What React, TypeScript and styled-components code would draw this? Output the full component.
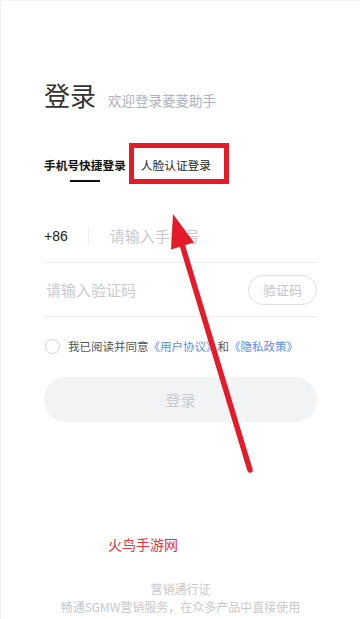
import React from "react";
import styled, { createGlobalStyle } from "styled-components";

const Global = createGlobalStyle`
  html, body { margin: 0; padding: 0; background: #fff; }
  body { font-family: "Noto Sans CJK SC", "Noto Sans", sans-serif; }
  * { box-sizing: border-box; }
`;

const Page = styled.div`
  position: relative;
  width: 360px;
  height: 619px;
  overflow: hidden;
  background: #fff;
  border-left: 1px solid #f0f0f0;
  border-top: 1px solid #f6f6f6;
  display: flex;
  flex-direction: column;
`;

const Content = styled.div`
  padding: 78px 43px 0 43px;
  display: flex;
  flex-direction: column;
`;

const Header = styled.div`
  display: flex;
  align-items: baseline;
  gap: 12px;
  height: 32px;
`;

const Title = styled.h1`
  margin: 0;
  font-size: 26px;
  line-height: 32px;
  font-weight: 400;
  color: #333;
`;

const Subtitle = styled.span`
  font-size: 13.5px;
  color: #aab0c0;
`;

const Tabs = styled.div`
  margin-top: 44px;
  display: flex;
  gap: 15px;
`;

const Tab = styled.div<{ $active?: boolean }>`
  display: flex;
  flex-direction: column;
  align-items: center;
  font-size: 11.7px;
  line-height: 20px;
  color: ${(p) => (p.$active ? "#111" : "#222")};
  font-weight: ${(p) => (p.$active ? 700 : 400)};
  &::after {
    content: "";
    margin-top: 5px;
    width: 30px;
    height: 2px;
    background: ${(p) => (p.$active ? "#111" : "transparent")};
  }
`;

const Form = styled.div`
  margin-top: 27px;
  display: flex;
  flex-direction: column;
`;

const Row = styled.div`
  height: 54px;
  display: flex;
  align-items: center;
  border-bottom: 1px solid #eeeeee;
`;

const Prefix = styled.span`
  font-size: 14px;
  color: #222;
  font-family: "Liberation Sans", "Noto Sans CJK SC", sans-serif;
`;

const Divider = styled.span`
  width: 1px;
  height: 16px;
  background: #eeeeee;
  margin: 0 21px 0 20px;
`;

const Placeholder = styled.span<{ $offset?: number }>`
  flex: 1;
  font-size: 15px;
  color: #c8cad0;
  padding-left: ${(p) => p.$offset ?? 0}px;
`;

const CodeButton = styled.button`
  width: 69px;
  height: 30px;
  border: 1px solid #dcdfe6;
  border-radius: 15px;
  background: #fff;
  font-family: inherit;
  font-size: 13px;
  color: #c0c4cc;
  padding: 0;
`;

const Agreement = styled.div`
  margin-top: 20px;
  height: 18px;
  display: flex;
  align-items: center;
  font-size: 11.5px;
  color: #555;
  white-space: nowrap;
`;

const Radio = styled.span`
  width: 15px;
  height: 15px;
  border: 1px solid #cfd2d8;
  border-radius: 50%;
  margin: 0 8px 0 1px;
  flex-shrink: 0;
`;

const Link = styled.span`
  color: #5b8def;
`;

const LoginButton = styled.button`
  margin-top: 22px;
  height: 45px;
  border: none;
  border-radius: 23px;
  background: #f2f3f5;
  font-family: inherit;
  font-size: 15px;
  color: #c8c9cc;
`;

const Watermark = styled.div`
  margin-top: 113px;
  padding-left: 64px;
  font-size: 14px;
  line-height: 18px;
  color: #e8323f;
`;

const Footer = styled.div`
  margin-top: 27px;
  display: flex;
  flex-direction: column;
  align-items: center;
  font-size: 12px;
  line-height: 18px;
  color: #c8c9cc;
  white-space: nowrap;
`;

const AnnotationBox = styled.div`
  position: absolute;
  left: 128px;
  top: 142px;
  width: 100px;
  height: 41px;
  border: 5px solid #e51b2a;
  pointer-events: none;
`;

const ArrowSvg = styled.svg`
  position: absolute;
  left: 0;
  top: 0;
  pointer-events: none;
`;

export default function App() {
  return (
    <>
      <Global />
      <Page>
        <Content>
          <Header>
            <Title>登录</Title>
            <Subtitle>欢迎登录菱菱助手</Subtitle>
          </Header>
          <Tabs>
            <Tab $active>手机号快捷登录</Tab>
            <Tab>人脸认证登录</Tab>
          </Tabs>
          <Form>
            <Row>
              <Prefix>+86</Prefix>
              <Divider />
              <Placeholder>请输入手机号</Placeholder>
            </Row>
            <Row>
              <Placeholder $offset={2}>请输入验证码</Placeholder>
              <CodeButton>验证码</CodeButton>
            </Row>
          </Form>
          <Agreement>
            <Radio />
            我已阅读并同意<Link>《用户协议》</Link>和<Link>《隐私政策》</Link>
          </Agreement>
          <LoginButton>登录</LoginButton>
          <Watermark>火鸟手游网</Watermark>
        </Content>
        <Footer>
          <div>营销通行证</div>
          <div>畅通SGMW营销服务，在众多产品中直接使用</div>
          <div>免去重复注册，一号畅享全部服务</div>
        </Footer>
        <AnnotationBox />
        <ArrowSvg width="360" height="619" viewBox="0 0 360 619">
          <line x1="249" y1="469" x2="180" y2="240" stroke="#e51b2a" strokeWidth="5.5" strokeLinecap="round" />
          <polygon points="172,213 170,248.5 193,241.5" fill="#e51b2a" />
        </ArrowSvg>
      </Page>
    </>
  );
}
